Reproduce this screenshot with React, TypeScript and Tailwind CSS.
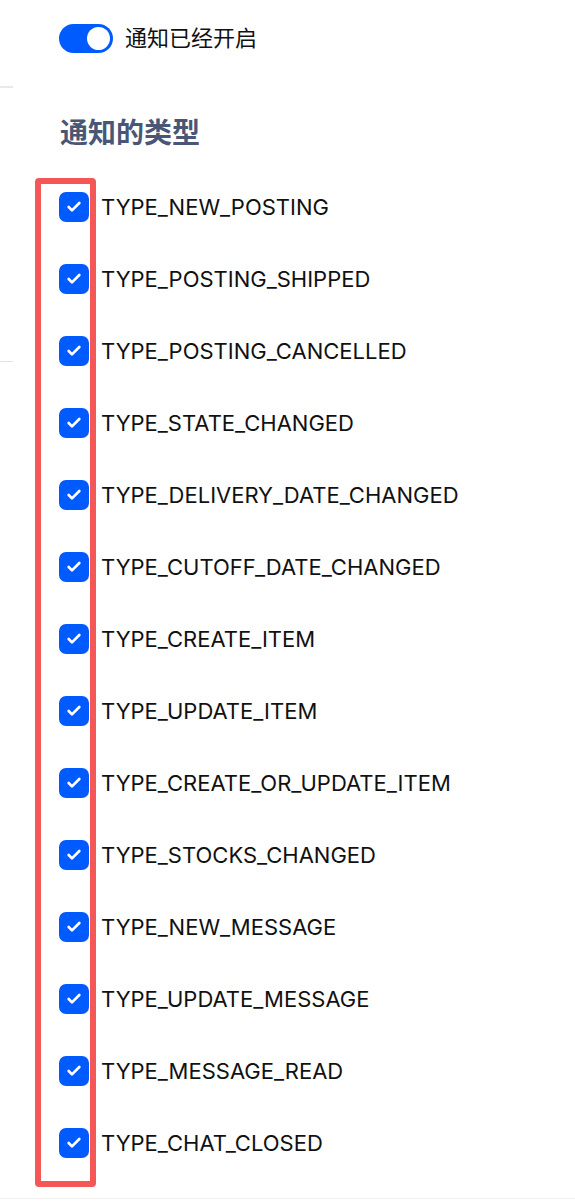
import { Check } from 'lucide-react';

const TYPES = [
  'TYPE_NEW_POSTING',
  'TYPE_POSTING_SHIPPED',
  'TYPE_POSTING_CANCELLED',
  'TYPE_STATE_CHANGED',
  'TYPE_DELIVERY_DATE_CHANGED',
  'TYPE_CUTOFF_DATE_CHANGED',
  'TYPE_CREATE_ITEM',
  'TYPE_UPDATE_ITEM',
  'TYPE_CREATE_OR_UPDATE_ITEM',
  'TYPE_STOCKS_CHANGED',
  'TYPE_NEW_MESSAGE',
  'TYPE_UPDATE_MESSAGE',
  'TYPE_MESSAGE_READ',
  'TYPE_CHAT_CLOSED',
];

function Toggle() {
  return (
    <div className="flex h-[29px] w-[54px] items-center justify-end rounded-full bg-[#005bff] pr-[3px]">
      <div className="h-[23px] w-[23px] rounded-full bg-white" />
    </div>
  );
}

function TypeRow({ label }: { label: string }) {
  return (
    <label className="flex h-[72px] items-center gap-3">
      <span className="flex h-[30px] w-[30px] shrink-0 items-center justify-center rounded-[7px] bg-[#005bff]">
        <Check className="h-[16px] w-[16px] text-white" strokeWidth={4} />
      </span>
      <span className="text-[22px] text-[#111]">{label}</span>
    </label>
  );
}

export default function App() {
  return (
    <div
      className="relative h-[1203px] w-[575px] overflow-hidden bg-white"
      style={{ fontFamily: 'Inter, "Noto Sans CJK SC", sans-serif' }}
    >
      <div className="flex items-center gap-3 pl-[59px] pt-[24px]">
        <Toggle />
        <span className="text-[22px] leading-[29px] text-[#111]">通知已经开启</span>
      </div>

      <div className="mt-[33px] h-[2px] w-[13px] bg-[#e6eaf0]" />

      <h2 className="mt-[27px] pl-[60px] text-[28px] font-bold leading-[36px] text-[#4a5675]">通知的类型</h2>

      <div className="relative mt-[20px] pl-[59px]">
        <div className="absolute left-0 top-[190px] h-px w-[13px] bg-[#e2e2e2]" />
        {TYPES.map((t) => (
          <TypeRow key={t} label={t} />
        ))}
      </div>

      <div className="absolute left-[35px] top-[178px] h-[1009px] w-[61px] rounded-[4px] border-[6px] border-[#f55656]" />

      <div className="absolute bottom-[4px] left-0 h-px w-full bg-[#efefef]" />
    </div>
  );
}
